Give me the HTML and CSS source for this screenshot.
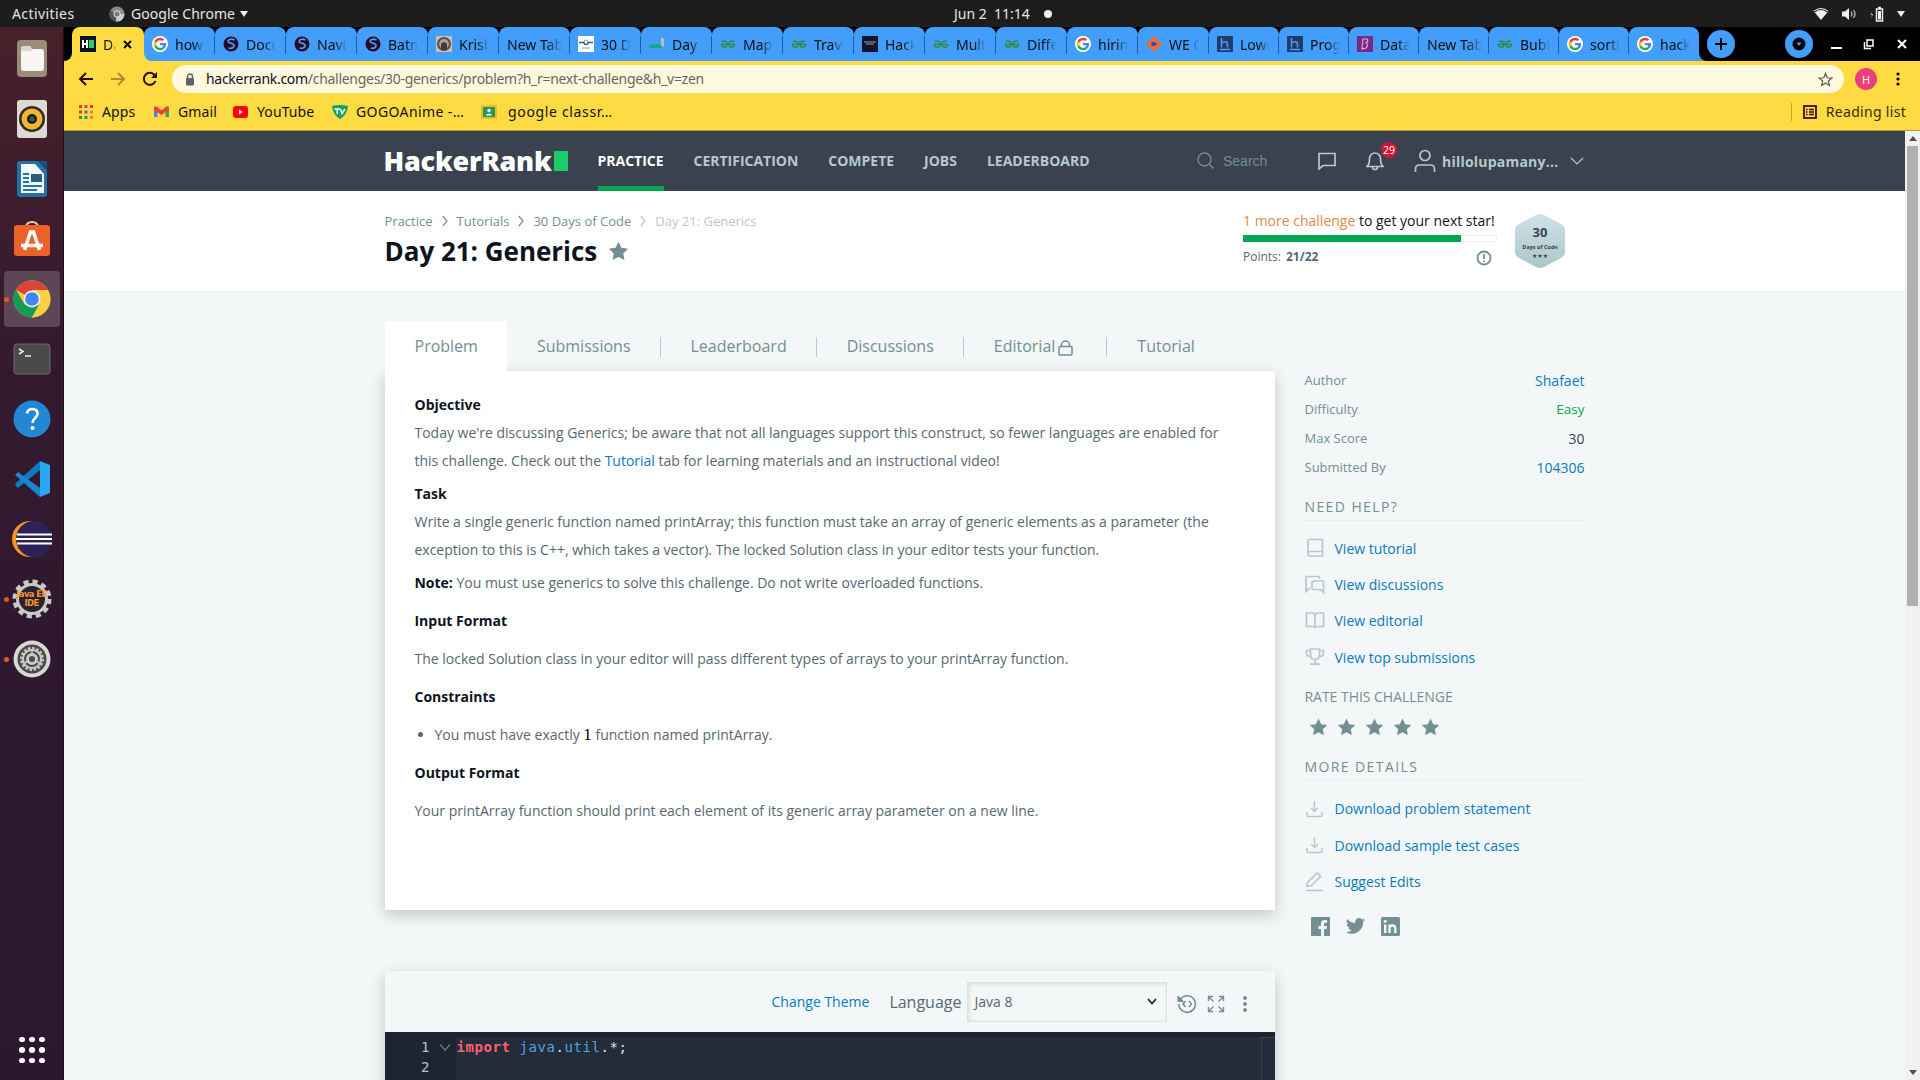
FILE: index.html
```html
<!DOCTYPE html>
<html lang="en">
<head>
<meta charset="utf-8">
<title>Day 21: Generics | HackerRank</title>
<link rel="stylesheet" href="styles.css">
</head>
<body>
<svg class="defs" width="0" height="0">
  <symbol id="g" viewBox="0 0 48 48"><circle cx="24" cy="24" r="24" fill="#fff"/><g transform="translate(5 5) scale(.79)"><path fill="#ea4335" d="M24 9.500c3.540 0 6.710 1.220 9.210 3.600l6.850-6.850C35.900 2.380 30.470 0 24 0 14.620 0 6.510 5.380 2.560 13.220l7.980 6.190C12.430 13.720 17.740 9.500 24 9.500z"/><path fill="#4285f4" d="M46.980 24.550c0-1.570-.15-3.090-.38-4.550H24v9.020h12.940c-.58 2.960-2.260 5.480-4.780 7.180l7.730 6c4.510-4.180 7.090-10.360 7.090-17.650z"/><path fill="#fbbc05" d="M10.530 28.590c-.48-1.450-.76-2.990-.76-4.590s.27-3.140.76-4.590l-7.980-6.190C.92 16.460 0 20.120 0 24s.92 7.540 2.560 10.780l7.970-6.190z"/><path fill="#34a853" d="M24 48c6.480 0 11.930-2.130 15.890-5.810l-7.730-6c-2.150 1.450-4.920 2.300-8.160 2.300-6.260 0-11.570-4.220-13.470-9.910l-7.980 6.190C6.510 42.620 14.620 48 24 48z"/></g></symbol>
  <symbol id="gfg" viewBox="0 0 16 16"><g fill="none" stroke="#2f8d46" stroke-width="1.500"><path d="M2 5.200h2.500q3.200.4 2.700 3.300-.6 2.700-3 2.700T1.500 9M1 8.300h14M14 5.200h-2.500q-3.200.4-2.700 3.300.6 2.700 3 2.700T14.500 9"/></g></symbol>
  <symbol id="globe" viewBox="0 0 16 16"><circle cx="8" cy="8" r="7.500" fill="#2a0a22"/><path d="M11.500 4Q9 2.500 6.500 3.500 4 5 6 6.500l4 1.500q2 1.500 0 3.500-2 1.500-4.500.5" fill="none" stroke="#439dfb" stroke-width="1.800"/></symbol>
  <symbol id="hh" viewBox="0 0 16 16"><rect width="16" height="16" rx="1" fill="#243a6b"/><path d="M4.500 2v9.500M4.500 7.500c1-2.300 6-2.300 6 .5v3.500M3 13.500h10" fill="none" stroke="#439dfb" stroke-width="1.500"/></symbol>
  <symbol id="star" viewBox="0 0 24 24"><path d="M12 .8l3.500 7.400 8.100 1.100-5.900 5.600 1.500 8L12 19.100l-7.200 3.800 1.500-8L.4 9.300l8.100-1.100z"/></symbol>
  <symbol id="dl" viewBox="0 0 20 20"><path d="M9.500 2v10M6 9l3.500 3.500L13 9M2 13v3q0 1.500 1.500 1.500h12q1.500 0 1.500-1.500v-3" fill="none" stroke="currentColor" stroke-width="1.500"/></symbol>
  <symbol id="crumb" viewBox="0 0 6 12"><path d="M.8 1l4.200 5-4.200 5" fill="none" stroke="currentColor" stroke-width="1.200"/></symbol>
</svg>

<div class="topbar ui">
  <span class="activities">Activities</span>
  <svg class="tb-chrome" width="16" height="16" viewBox="0 0 16 16"><circle cx="8" cy="8" r="7.500" fill="#8c8c8c"/><path d="M8 8L1 4.500A7.500 7.500 0 0 0 7 15.500z" fill="#555"/><path d="M8 8h7.500A7.500 7.500 0 0 1 7 15.500z" fill="#ccc"/><circle cx="8" cy="8" r="3.500" fill="#ddd"/><circle cx="8" cy="8" r="2.500" fill="#777"/></svg>
  <span class="app-name">Google Chrome</span>
  <span class="caret"></span>
  <span class="clock">Jun 2&nbsp; 11:14</span><span class="dot"></span>
  <div class="tray">
    <svg width="16" height="14" viewBox="0 0 16 14"><path d="M.5 4Q8-2 15.500 4L8 13z" fill="#eee"/><path d="M1.500 5Q8 0 14.500 5" fill="none" stroke="#1d1d1d" stroke-width="1.200"/></svg>
    <svg width="16" height="14" viewBox="0 0 16 14"><path d="M1 4.500h3L8 1v12L4 9.500H1z" fill="#eee"/><path d="M10 4.500q2 2.500 0 5M12.500 3q3 4 0 8" fill="none" stroke="#ccc" stroke-width="1.200"/></svg>
    <svg width="16" height="16" viewBox="0 0 16 16"><path d="M3.500 5L1 9h2l-1 3.500L4.500 8h-2z" fill="#999"/><path d="M9 1.500h3M7.500 3h6v12h-6z" fill="none" stroke="#eee" stroke-width="1.500"/><path d="M9 5h3v8.500H9z" fill="#eee"/></svg>
    <span class="caret"></span>
  </div>
</div>

<div class="desktop">
<aside class="dock">
  <div class="app"><svg width="32" height="40" viewBox="0 0 32 40"><rect x="1" y="1" width="30" height="37" rx="4" fill="#9a8c79"/><path d="M5 10q0-3 3-3h6l2 3h9q3 0 3 3v16q0 3-3 3H8q-3 0-3-3z" fill="#f8f6f4"/><path d="M5 11q0-4 3-4h6l2 3v2H5z" fill="#ddd6cd"/></svg></div>
  <div class="app"><svg width="32" height="40" viewBox="0 0 32 40"><rect x="1" y="1" width="30" height="38" rx="3" fill="#dedad2"/><circle cx="16" cy="20" r="13" fill="#2c2c2c"/><circle cx="16" cy="20" r="10.500" fill="#f0b92b"/><circle cx="16" cy="20" r="5" fill="#1c1c1c"/><circle cx="16" cy="20" r="2.500" fill="#555"/></svg></div>
  <div class="app"><svg width="32" height="38" viewBox="0 0 32 38"><path d="M4 1h18l9 9v24q0 3-3 3H4q-3 0-3-3V4q0-3 3-3z" fill="#1e74a8"/><path d="M5 4h14l9 10v19H5z" fill="#f5f8fa"/><path d="M23 1h8v8z" fill="#15587f"/><path d="M7 14h6M7 18h6M7 22h6M7 26h19M7 30h14" stroke="#1e74a8" stroke-width="1.800"/><rect x="15" y="14" width="11" height="8" fill="#2d5d7c"/></svg></div>
  <div class="app"><svg width="38" height="38" viewBox="0 0 38 38"><path d="M13 8q0-6 6-6t6 6" fill="none" stroke="#e3cda5" stroke-width="2"/><rect x="1" y="5" width="36" height="31" rx="3" fill="#ee6129"/><path d="M11.500 30l6-18h3l6 18M8 25.500h22" fill="none" stroke="#fff" stroke-width="3.500"/></svg></div>
  <div class="app active"><i></i><svg width="38" height="38" viewBox="0 0 38 38"><circle cx="19" cy="19" r="18.500" fill="#f9c935"/><path d="M19 19L3 9.750A18.500 18.500 0 0 1 35 10H19z" fill="#dc4437"/><path d="M3 9.750A18.500 18.500 0 0 0 19 37.500L26 25 12 25z" fill="#159b58"/><path d="M26.500 24L19 37.500A18.500 18.500 0 0 0 35 10H19z" fill="#fecf44"/><circle cx="19" cy="19" r="8.500" fill="#f1f1f1"/><circle cx="19" cy="19" r="6.800" fill="#4285f4"/></svg></div>
  <div class="app"><svg width="38" height="32" viewBox="0 0 38 32"><rect x="1" y="1" width="36" height="30" rx="3" fill="#4a4a4a" stroke="#6a6a6a"/><path d="M6 6l4 2.500L6 11M12 13h6" fill="none" stroke="#eee" stroke-width="1.500"/></svg></div>
  <div class="app"><svg width="38" height="38" viewBox="0 0 38 38"><circle cx="19" cy="19" r="18.500" fill="#2387d3"/><path d="M14 13.500q.5-4.500 5.500-4.500t5 5c0 3.500-5 4.500-5 9" fill="none" stroke="#fff" stroke-width="2.600"/><circle cx="19.500" cy="28" r="2" fill="#fff"/></svg></div>
  <div class="app"><svg width="38" height="38" viewBox="0 0 38 38"><path d="M27 1v9L5 28l-3-3 1-2z" fill="#0f7ac0"/><path d="M27 28v9L2 15l3-3z" fill="#1687d0"/><path d="M27 1l10 4v28l-10 4z" fill="#2ba6f2"/></svg></div>
  <div class="app"><svg width="42" height="38" viewBox="0 0 42 38"><circle cx="19" cy="19" r="18" fill="#f7941e"/><circle cx="23" cy="19" r="18" fill="#2c2255"/><path d="M6 14.500h35M5 19h36M6 23.500h35" stroke="#fff" stroke-width="2.200"/></svg></div>
  <div class="app"><i></i><svg width="40" height="40" viewBox="0 0 40 40"><circle cx="20" cy="20" r="17" fill="none" stroke="#c9c9c9" stroke-width="5" stroke-dasharray="5 3.900"/><circle cx="20" cy="20" r="14.500" fill="#2a2230" stroke="#c9c9c9" stroke-width="3"/></svg><b>Java EE<br>IDE</b></div>
  <div class="app"><i></i><svg width="38" height="38" viewBox="0 0 38 38"><circle cx="19" cy="19" r="18.500" fill="#d8d8d5"/><circle cx="19" cy="19" r="14.500" fill="#4b4b4b"/><circle cx="19" cy="19" r="10.500" fill="none" stroke="#c9c9c9" stroke-width="3" stroke-dasharray="2.500 1.600"/><circle cx="19" cy="19" r="9" fill="none" stroke="#c9c9c9" stroke-width="2"/><circle cx="19" cy="19" r="4.500" fill="none" stroke="#c9c9c9" stroke-width="3"/><path d="M19 14V9M15 21l-5 3M23 21l5 3" stroke="#c9c9c9" stroke-width="1.500"/></svg></div>
  <div class="grid-btn"><s></s><s></s><s></s><s></s><s></s><s></s><s></s><s></s><s></s></div>
</aside>

<main class="window">
  <div class="tabstrip ui">
    <div class="edge"><span></span></div>
    <div class="tabs">
      <div class="tab on"><svg width="16" height="16" viewBox="0 0 16 16"><rect width="16" height="16" fill="#0b121c"/><path d="M3 4v8M7 4v8M3 8h4" stroke="#fff" stroke-width="2"/><rect x="9" y="4" width="5" height="8" fill="#1ed760"/></svg><span>Day</span><em><svg width="9" height="9" viewBox="0 0 9 9"><path d="M1 1l7 7M8 1L1 8" stroke="#000" stroke-width="1.800"/></svg></em></div>
      <div class="tab first"><div><svg width="16" height="16"><use href="#g"/></svg><span>how to</span></div></div>
      <div class="tab"><svg width="16" height="16"><use href="#globe"/></svg><span>Docum</span></div>
      <div class="tab"><svg width="16" height="16"><use href="#globe"/></svg><span>Navig</span></div>
      <div class="tab"><svg width="16" height="16"><use href="#globe"/></svg><span>Batma</span></div>
      <div class="tab"><svg width="16" height="16" viewBox="0 0 16 16"><rect width="16" height="16" fill="#c9bfb5"/><circle cx="8" cy="8" r="7" fill="#5a4c49"/><circle cx="8" cy="8" r="5" fill="#aaa09a"/><path d="M5 14V8q3-4 6 0v6z" fill="#45383a"/></svg><span>Krishn</span></div>
      <div class="tab plain"><span>New Tab</span></div>
      <div class="tab"><svg width="16" height="16" viewBox="0 0 16 16"><rect width="16" height="16" fill="#fff"/><path d="M1 6.500h5a2 2 0 0 0 4 0h5" fill="none" stroke="#34618f" stroke-width="1.500"/><path d="M6 6a2 2 0 0 1 4 0M4 12h8" fill="none" stroke="#789bbd"/></svg><span>30 Day</span></div>
      <div class="tab"><svg width="16" height="16" viewBox="0 0 16 16"><path d="M0 8l2 1 2-1 2 1 2-1 5 1v3H0z" fill="#11a88a"/><path d="M12 1l3 2v8l-3-1z" fill="#b8bcc0"/></svg><span>Day 7</span></div>
      <div class="tab"><svg width="16" height="16"><use href="#gfg"/></svg><span>Map i</span></div>
      <div class="tab"><svg width="16" height="16"><use href="#gfg"/></svg><span>Traver</span></div>
      <div class="tab"><svg width="16" height="16" viewBox="0 0 16 16"><rect width="16" height="16" fill="#0f1730"/><path d="M2 6h12M4 8h8" stroke="#6b7385" stroke-width="1.500"/></svg><span>Hacke</span></div>
      <div class="tab"><svg width="16" height="16"><use href="#gfg"/></svg><span>Multip</span></div>
      <div class="tab"><svg width="16" height="16"><use href="#gfg"/></svg><span>Differ</span></div>
      <div class="tab"><svg width="16" height="16"><use href="#g"/></svg><span>hiring</span></div>
      <div class="tab"><svg width="16" height="16" viewBox="0 0 16 16"><path d="M8 0l8 8-8 8-8-8z" fill="#f26a28"/><path d="M5.500 6h3l3 2-3 2h-3z" fill="#2a4bd0"/></svg><span>WE Ca</span></div>
      <div class="tab"><svg width="16" height="16"><use href="#hh"/></svg><span>Lowe</span></div>
      <div class="tab"><svg width="16" height="16"><use href="#hh"/></svg><span>Progr</span></div>
      <div class="tab"><svg width="16" height="16" viewBox="0 0 16 16"><rect width="16" height="16" fill="#7b2a83"/><path d="M5 13L6 3h4q2 2-1 4 3 2 0 5z" fill="none" stroke="#e6a8e8" stroke-width="1.200"/></svg><span>Data S</span></div>
      <div class="tab plain"><span>New Tab</span></div>
      <div class="tab"><svg width="16" height="16"><use href="#gfg"/></svg><span>Bubbl</span></div>
      <div class="tab"><svg width="16" height="16"><use href="#g"/></svg><span>sortin</span></div>
      <div class="tab last"><svg width="16" height="16"><use href="#g"/></svg><span>hacke</span></div>
    </div>
    <div class="edge blue"><span></span></div>
    <div class="round plus"><svg width="14" height="14" viewBox="0 0 14 14"><path d="M7 1v12M1 7h12" stroke="#000" stroke-width="2"/></svg></div>
    <div class="round search-tabs"><svg width="14" height="14" viewBox="0 0 14 14"><circle cx="7" cy="7" r="6.500"/><path d="M4.500 5.500h5L7 9z" fill="#439dfb"/></svg></div>
    <svg class="min" width="11" height="12" viewBox="0 0 11 12"><path d="M0 10h11" stroke="#fff" stroke-width="2"/></svg>
    <svg class="res" width="11" height="11" viewBox="0 0 11 11"><path d="M4 1h6v6H4zM1.500 3v6.500H8" fill="none" stroke="#fff" stroke-width="1.500"/></svg>
    <svg class="cls" width="10" height="10" viewBox="0 0 10 10"><path d="M1 1l8 8M9 1L1 9" stroke="#fff" stroke-width="2"/></svg>
  </div>

  <div class="toolbar ui">
    <svg width="16" height="16" viewBox="0 0 16 16"><path d="M15 8H2M8 2L2 8l6 6" fill="none" stroke="#2a0a10" stroke-width="2"/></svg>
    <svg width="16" height="16" viewBox="0 0 16 16"><path d="M1 8h13M8 2l6 6-6 6" fill="none" stroke="#b08a2c" stroke-width="2"/></svg>
    <svg width="16" height="16" viewBox="0 0 16 16"><path d="M13.500 10A6 6 0 1 1 12.500 4L14 6" fill="none" stroke="#2a0a10" stroke-width="2"/><path d="M15 1v6H9z" fill="#2a0a10"/></svg>
    <div class="omni">
      <svg width="10" height="13" viewBox="0 0 10 13"><path d="M2.500 5V3.500a2.500 2.500 0 0 1 5 0V5" fill="none" stroke="#5f6368" stroke-width="1.500"/><rect x="1" y="5" width="8" height="7.500" rx="1" fill="#5f6368"/></svg>
      <span class="url">hackerrank.com<i>/challenges/30-generics/problem?h_r=next-challenge&amp;h_v=zen</i></span>
      <svg class="fav" width="15" height="15" viewBox="0 0 24 24"><path d="M12 2.500l2.800 6.700 7.200.6-5.500 4.700 1.700 7L12 17.700l-6.200 3.800 1.700-7L2 9.800l7.200-.6z" fill="none" stroke="#5f5f55" stroke-width="2"/></svg>
    </div>
    <div class="avatar">H</div>
    <svg class="kebab" width="4" height="14" viewBox="0 0 4 14"><circle cx="2" cy="2" r="1.600"/><circle cx="2" cy="7" r="1.600"/><circle cx="2" cy="12" r="1.600"/></svg>
  </div>

  <div class="bookmarks ui">
    <div class="bm b1"><svg width="14" height="14" viewBox="0 0 14 14"><path d="M0 0h3v3H0zM5.500 0h3v3h-3zM11 0h3v3h-3zM0 5.500h3v3H0z" fill="#e53a2e"/><path d="M5.500 5.500h3v3h-3z" fill="#2a7be0"/><path d="M0 11h3v3H0zM5.500 11h3v3h-3z" fill="#2c9a4b"/><path d="M11 5.500h3v3h-3zM11 11h3v3h-3z" fill="#f08a1c"/></svg><span>Apps</span></div>
    <div class="bm b2"><svg width="15" height="12" viewBox="0 0 15 12"><path d="M0 1v10h3.500V4z" fill="#4285f4"/><path d="M15 1v10h-3.500V4z" fill="#34a853"/><path d="M0 1.500Q1.500-.5 3.500 1l4 3.200 4-3.200q2-1.500 3.500.5V4L7.500 9 0 4z" fill="#ea4335"/></svg><span>Gmail</span></div>
    <div class="bm b3"><svg width="15" height="12" viewBox="0 0 15 12"><rect width="15" height="12" rx="3" fill="#f00"/><path d="M6 3.500l4 2.500-4 2.500z" fill="#fff"/></svg><span>YouTube</span></div>
    <div class="bm b4"><svg width="16" height="14" viewBox="0 0 16 14"><path d="M0 1q8-2 16 0-1 9-8 13Q1 10 0 1z" fill="#12a25b"/><path d="M2.500 4H8M5.200 4v5M8.500 4L10 8.500 13 4" fill="none" stroke="#fff" stroke-width="1.500"/></svg><span>GOGOAnime -…</span></div>
    <div class="bm b5"><svg width="16" height="14" viewBox="0 0 16 14"><rect width="16" height="14" rx="1" fill="#f2b92b"/><rect x="2" y="2" width="12" height="10" fill="#23985a"/><circle cx="8" cy="5.500" r="1.700" fill="#fff"/><path d="M4.500 10.500q3.500-4 7 0z" fill="#fff"/></svg><span>google classr…</span></div>
    <div class="reading"><svg width="14" height="14" viewBox="0 0 14 14"><rect x="1" y="1" width="12" height="12" fill="none" stroke="#3a1010" stroke-width="1.800"/><path d="M3 4.500h1.500M3 7h1.500M3 9.500h1.500M6 4.500h5M6 7h5M6 9.500h5" stroke="#3a1010" stroke-width="1.500"/></svg><span>Reading list</span></div>
  </div>

  <div class="viewport">
  <div class="page">
    <header class="hr-nav"><div class="wrap">
      <div class="logo">HackerRank<span></span></div>
      <nav><a class="on">PRACTICE</a><a>CERTIFICATION</a><a>COMPETE</a><a>JOBS</a><a>LEADERBOARD</a></nav>
      <div class="tools">
        <svg class="mag" width="18" height="18" viewBox="0 0 18 18"><circle cx="7.500" cy="7.500" r="6.500"/><path d="M12.500 12.500l4 4"/></svg>
        <span class="search">Search</span>
        <svg class="msg" width="18" height="18" viewBox="0 0 18 18"><path d="M1 1.500h16v12H5L1 17z"/></svg>
        <div class="bell"><svg width="18" height="20" viewBox="0 0 18 20"><path d="M1 15.500q2.500-2 2.500-8a5.500 5.500 0 0 1 11 0q0 6 2.500 8zM6.500 16a2.500 2.500 0 0 0 5 0"/></svg><b>29</b></div>
        <svg class="usr" width="22" height="24" viewBox="0 0 22 24"><circle cx="11" cy="6.500" r="5"/><path d="M1.500 23v-3q0-4 4-4h11q4 0 4 4v3"/></svg>
        <span class="name">hillolupamany...</span>
        <svg class="chev" width="14" height="8" viewBox="0 0 14 8"><path d="M1 1l6 6 6-6"/></svg>
      </div>
    </div></header>

    <section class="hero"><div class="wrap">
      <div class="head">
        <div class="crumbs"><span>Practice</span><svg width="6" height="12"><use href="#crumb"/></svg><span>Tutorials</span><svg width="6" height="12"><use href="#crumb"/></svg><span>30 Days of Code</span><svg class="dim" width="6" height="12"><use href="#crumb"/></svg><span class="dim">Day 21: Generics</span></div>
        <h1>Day 21: Generics<svg width="21" height="20"><use href="#star"/></svg></h1>
      </div>
      <div class="progress">
        <p><span>1 more challenge</span> to get your next star!</p>
        <div class="bar"><div></div></div>
        <div class="points">Points:<b>21/22</b><svg width="16" height="16" viewBox="0 0 16 16"><circle cx="8" cy="8" r="6.500"/><path d="M8 4v5M8 10.500V12"/></svg></div>
      </div>
      <div class="badge"><svg width="50" height="56" viewBox="0 0 50 56"><defs><linearGradient id="bg" x1="0" y1="0" x2="0" y2="1"><stop offset="0" stop-color="#cfe2ea"/><stop offset="1" stop-color="#abc6c6"/></linearGradient></defs><path d="M21 2q4-2 8 0l17 9q4 2 4 6v22q0 4-4 6l-17 9q-4 2-8 0L4 45q-4-2-4-6V17q0-4 4-6z" fill="url(#bg)"/></svg><div><b>30</b><small>Days of Code</small><em>★★★</em></div></div>
    </div></section>

    <div class="wrap body">
      <div class="main">
        <div class="ptabs"><a class="on">Problem</a><a>Submissions</a><a>Leaderboard</a><a>Discussions</a><a class="ed">Editorial<svg width="15" height="16" viewBox="0 0 15 16"><rect x="1" y="6.500" width="13" height="8.500" rx="1"/><path d="M3.500 6.500V5a4 4 0 0 1 8 0v1.500"/></svg></a><a>Tutorial</a></div>
        <div class="panel">
          <p><b>Objective</b><br>Today we're discussing Generics; be aware that not all languages support this construct, so fewer languages are enabled for<br>this challenge. Check out the <a>Tutorial</a> tab for learning materials and an instructional video!</p>
          <p><b>Task</b><br>Write a single generic function named printArray; this function must take an array of generic elements as a parameter (the<br>exception to this is C++, which takes a vector). The locked Solution class in your editor tests your function.</p>
          <p><b>Note:</b> You must use generics to solve this challenge. Do not write overloaded functions.</p>
          <div class="sec"><b>Input Format</b></div>
          <div class="sec">The locked Solution class in your editor will pass different types of arrays to your printArray function.</div>
          <div class="sec"><b>Constraints</b></div>
          <ul class="sec"><li>You must have exactly <span class="math">1</span> function named printArray.</li></ul>
          <div class="sec"><b>Output Format</b></div>
          <div class="sec">Your printArray function should print each element of its generic array parameter on a new line.</div>
        </div>

        <div class="editor">
          <div class="ebar">
            <a>Change Theme</a><span class="lang">Language</span>
            <div class="select">Java 8<svg width="10" height="7" viewBox="0 0 10 7"><path d="M1 1l4 4.500L9 1" fill="none" stroke="#222" stroke-width="1.800"/></svg></div>
            <svg class="e1" width="20" height="20" viewBox="0 0 20 20"><path d="M3.500 5A8.300 8.300 0 1 1 1.800 10" fill="none" stroke="#738f93" stroke-width="1.600"/><path d="M1 2v5.500h5.500z" fill="#738f93" stroke="#738f93"/><path d="M8.500 7L6 10l2.500 3M12 7l2.500 3-2.500 3" fill="none" stroke="#738f93" stroke-width="1.500"/></svg>
            <svg class="e2" width="18" height="18" viewBox="0 0 18 18"><path d="M1.500 6V1.500H6M12 1.500h4.500V6M16.500 12v4.500H12M6 16.500H1.500V12M1.500 1.500l5 5M16.500 1.500l-5 5M16.500 16.500l-5-5M1.500 16.500l5-5" fill="none" stroke="#738f93" stroke-width="1.400"/></svg>
            <svg class="e3" width="4" height="16" viewBox="0 0 4 16" fill="#738f93"><circle cx="2" cy="2" r="2"/><circle cx="2" cy="8" r="2"/><circle cx="2" cy="14" r="2"/></svg>
          </div>
          <div class="code">
            <div class="gutter"><div>1<svg width="12" height="7" viewBox="0 0 12 7"><path d="M1 .5l5 5.500 5-5.500" fill="none" stroke="#8d9aa3" stroke-width="1.100"/></svg></div><div>2</div></div>
            <pre><b>import</b> <i>java</i>.<i>util</i>.*;</pre>
            <div class="ruler"></div>
          </div>
        </div>
      </div>

      <aside class="side">
        <dl><dt>Author</dt><dd class="lk">Shafaet</dd><dt>Difficulty</dt><dd class="easy">Easy</dd><dt>Max Score</dt><dd>30</dd><dt>Submitted By</dt><dd class="lk">104306</dd></dl>
        <h4 class="help">NEED HELP?</h4>
        <ul class="links">
          <li><svg width="20" height="20" viewBox="0 0 20 20"><path d="M3 15V3q0-1.500 1.500-1.500h13v16.500H4.500Q3 18 3 16.500V15q0-1.500 1.500-1.500h13"/></svg>View tutorial</li>
          <li><svg width="20" height="20" viewBox="0 0 20 20"><path d="M14.500 4V3q0-1.500-1.500-1.500H2.500Q1 1.500 1 3v13.500l4-3.500M7.500 7q-.5-1 1-1h8.500q1.500 0 1.500 1.500V17.500l-3-3H8.500q-1.500 0-1.500-1.500V7z"/></svg>View discussions</li>
          <li><svg width="20" height="20" viewBox="0 0 20 20"><path d="M10 4.500Q9.500 2 7 2H1.500v13.500H7.500q2.500 0 2.500 2 0-2 2.500-2h6V2H13q-2.500 0-3 2.500v13"/></svg>View editorial</li>
          <li><svg width="20" height="20" viewBox="0 0 20 20"><path d="M5.500 2h9v6q0 4.500-4.500 4.500T5.500 8zM5.500 3.500h-4v3q0 3 4 3M14.500 3.500h4v3q0 3-4 3M10 12.500V17M5 17.200h10"/></svg>View top submissions</li>
        </ul>
        <h5>RATE THIS CHALLENGE</h5>
        <div class="stars"><svg width="19" height="18"><use href="#star"/></svg><svg width="19" height="18"><use href="#star"/></svg><svg width="19" height="18"><use href="#star"/></svg><svg width="19" height="18"><use href="#star"/></svg><svg width="19" height="18"><use href="#star"/></svg></div>
        <h4>MORE DETAILS</h4>
        <ul class="links more">
          <li><svg width="20" height="20"><use href="#dl"/></svg>Download problem statement</li>
          <li><svg width="20" height="20"><use href="#dl"/></svg>Download sample test cases</li>
          <li><svg width="20" height="20" viewBox="0 0 20 20"><path d="M2 14.500l.5-4L11.500 1.500q1-1 3 1.500t.5 2L6.500 13.500zM1 18.500h17"/></svg>Suggest Edits</li>
        </ul>
        <div class="social">
          <svg width="19" height="19" viewBox="0 0 19 19"><path d="M1 0h17q1 0 1 1v17q0 1-1 1h-5v-7h2.500l.4-3H13V7q0-1.300 1.500-1.300H16V3h-2.300Q10 3 10 6.600V9H7.500v3H10v7H1q-1 0-1-1V1q0-1 1-1z"/></svg>
          <svg width="19" height="16" viewBox="0 0 24 20"><path d="M24 2.400a10 10 0 0 1-2.800.8A5 5 0 0 0 23.300.5a10 10 0 0 1-3.100 1.200 4.900 4.900 0 0 0-8.400 4.500A14 14 0 0 1 1.700 1a4.900 4.900 0 0 0 1.500 6.600A4.900 4.900 0 0 1 1 7v.1a4.900 4.900 0 0 0 4 4.800 5 5 0 0 1-2.300.1 4.900 4.900 0 0 0 4.600 3.400A9.900 9.900 0 0 1 0 17.500 14 14 0 0 0 21.500 5a10 10 0 0 0 2.500-2.600z"/></svg>
          <svg width="19" height="19" viewBox="0 0 19 19"><rect width="19" height="19" rx="1.500"/><path d="M4.200 7.500V16M8.500 7.500V16M8.500 11q.5-2.500 3-2.500t2.800 3V16" fill="none" stroke="#f3f7f7" stroke-width="2.400"/><circle cx="4.200" cy="4.300" r="1.600" fill="#f3f7f7"/></svg>
        </div>
      </aside>
    </div>
  </div>
  <div class="scroll"><u></u><div></div></div>
  </div>
</main>
</div>
</body>
</html>
```
FILE: styles.css
```css
* { box-sizing: border-box; }
body { margin: 0; width: 1920px; height: 1080px; overflow: hidden; font-family: "Open Sans", sans-serif; display: flex; flex-direction: column; }
svg { display: block; flex: none; }
.defs { position: absolute; }
p, h1, h4, h5, ul, dl, dd, pre { margin: 0; padding: 0; }
ul { list-style: none; }
.ui { font-family: "Noto Sans", sans-serif; font-size: 14px; white-space: nowrap; }

.topbar { height: 27px; flex: none; background: #1d1d1d; color: #e6e6e6; display: flex; align-items: center; padding: 0 12px; }
.activities { width: 97px; letter-spacing: .42px; }
.app-name { margin-left: 6px; width: 109px; letter-spacing: .05px; }
.caret { border: 4.500px solid transparent; border-top: 6px solid #eee; border-bottom: 0; }
.clock { margin-left: 706px; width: 79px; }
.dot { width: 8px; height: 8px; margin-left: 11px; border-radius: 50%; background: #eee; }
.tray { margin-left: auto; margin-right: 3px; display: flex; align-items: center; gap: 12px; }

.desktop { flex: 1; min-height: 0; display: flex; }
.dock { width: 64px; flex: none; background: linear-gradient(#48202a, #351a2e 30%, #2d1830 70%, #2a172e); border-right: 1px solid #1c1018; display: flex; flex-direction: column; align-items: center; padding-top: 2px; }
.app { position: relative; width: 56px; height: 56px; margin: 2px 0; display: flex; align-items: center; justify-content: center; border-radius: 4px; }
.app.active { background: #5d4657; }
.app i { position: absolute; left: 0; top: 26px; width: 5px; height: 5px; border-radius: 50%; background: #e95420; }
.app b { position: absolute; inset: 19px 0 auto; text-align: center; white-space: nowrap; font: bold 8.500px/9px "DejaVu Sans", sans-serif; letter-spacing: -.6px; color: #f59331; }
.grid-btn { margin: auto 0 17px; display: grid; grid-template-columns: repeat(3, 5px); gap: 5px; }
.grid-btn s { width: 5.500px; height: 5.500px; border-radius: 50%; background: #fff; }

.window { flex: 1; min-width: 0; display: flex; flex-direction: column; }
.tabstrip { height: 34px; flex: none; background: #000; display: flex; align-items: center; color: #111; }
.edge { width: 8px; height: 34px; background: #ffdb43; }
.edge span { display: block; height: 100%; background: #000; border-radius: 0 0 8px 0; }
.edge.blue { background: #439dfb; }
.edge.blue span { border-radius: 0 0 0 8px; }
.tabs { height: 34px; display: grid; grid-template-columns: 72px repeat(15, 71px) repeat(7, 70px); }
.tab { position: relative; min-width: 0; height: 34px; display: flex; align-items: center; gap: 7px; padding-left: 8px; border-radius: 8px 8px 0 0; background: #439dfb; }
.tab:not(.on):not(.last)::after { content: ""; position: absolute; right: 0; top: 9px; width: 1px; height: 18px; background: #1d5da8; }
.tab > span, .tab.first span { width: 30px; overflow: hidden; -webkit-mask-image: linear-gradient(90deg, #000 60%, transparent); mask-image: linear-gradient(90deg, #000 60%, transparent); }
.tab.plain > span { width: 56px; -webkit-mask-image: linear-gradient(90deg, #000 70%, transparent); mask-image: linear-gradient(90deg, #000 70%, transparent); }
.tab.on { background: #ffdb43; }
.tab.on > span { width: 13px; }
.tab.first { padding: 0; background: linear-gradient(#000 50%, #ffdb43 50%); border-radius: 0; }
.tab.first > div { flex: 1; height: 34px; display: flex; align-items: center; gap: 7px; padding-left: 8px; background: #439dfb; border-radius: 8px 8px 0 8px; }
.round { width: 28px; height: 28px; border-radius: 50%; background: #439dfb; display: grid; place-items: center; }
.search-tabs { margin-left: 50px; }
.min { margin-left: 18px; } .res { margin-left: 21px; } .cls { margin-left: 23px; }

.toolbar { height: 36px; flex: none; background: #ffdb43; display: flex; align-items: center; padding-left: 14px; gap: 16px; }
.omni { width: 1672px; height: 28px; margin-left: -2px; border-radius: 14px; background: #fff9e0; display: flex; align-items: center; padding: 0 11px 0 13px; }
.url { margin: -2px 0 0 11px; color: #111; letter-spacing: -.29px; }
.url i { font-style: normal; color: #6b675a; }
.fav { margin-left: auto; }
.avatar { width: 22px; height: 22px; margin-left: -5px; border-radius: 50%; background: #ec407a; color: #fff; font-size: 11px; display: grid; place-items: center; }
.kebab { margin-left: 3px; }

.bookmarks { height: 34px; flex: none; background: #ffdb43; border-bottom: 1px solid #b89a2e; display: flex; align-items: center; padding: 0 14px 4px 15px; color: #111; }
.bm { display: flex; align-items: center; }
.bm span { margin-left: 9px; letter-spacing: .1px; }
.b1 { width: 75px; } .b2 { width: 79px; } .b3 { width: 99px; } .b4 { width: 149px; }
.b4 span { letter-spacing: .4px; margin-left: 8px; }
.b5 span { margin-left: 11px; letter-spacing: .66px; }
.reading { margin-left: auto; height: 18px; border-left: 1px solid #c9a52c; padding-left: 11px; display: flex; align-items: center; gap: 9px; color: #3a2a10; letter-spacing: .3px; }

.viewport { flex: 1; min-height: 0; display: flex; }
.page { flex: 1; min-width: 0; overflow: hidden; background: #f3f7f7; }
.wrap { width: 1200px; margin: 0 auto; display: flex; }
.hr-nav { height: 60px; background: #39424e; }
.hr-nav .wrap { height: 60px; align-items: center; }
.logo { width: 214px; margin-left: -1px; display: flex; align-items: center; gap: 2px; font-size: 27px; font-weight: 800; letter-spacing: -.22px; color: #fff; line-height: 40px; }
.logo span { width: 14px; height: 20px; background: #1bcb6c; }
nav { display: flex; gap: 30px; height: 60px; font-size: 14px; font-weight: 700; line-height: 60px; color: #b7c9cc; white-space: nowrap; letter-spacing: -.01px; }
nav .on { color: #fff; box-shadow: inset 0 -5px #00a651; }
.tools { margin: 0 .5px 0 auto; display: flex; align-items: center; }
.tools svg { fill: none; stroke: #b7c9cc; stroke-width: 1.700; }
.tools .mag { stroke: #738f93; stroke-width: 1.400; }
.search { width: 44px; margin: 0 51px 0 8px; font: 14px "Liberation Sans", sans-serif; color: #738f93; }
.bell { position: relative; margin: 0 30px; }
.bell b { position: absolute; left: 15px; top: -9px; width: 16px; height: 16px; border-radius: 50%; background: #d11534; color: #fff; font: 10.500px/16px "Open Sans", sans-serif; text-align: center; }
.name { width: 116px; margin: 0 12px 0 6px; font-size: 14px; font-weight: 700; color: #b7c9cc; letter-spacing: .22px; }
.tools .chev { stroke-width: 1.200; }

.hero { height: 101px; background: #fff; border-bottom: 1px solid #e7eeef; }
.head { width: 858.500px; padding-top: 19px; }
.crumbs { display: flex; align-items: center; gap: 9px; height: 21px; font-size: 13px; color: #738f93; }
.dim { color: #b7c9cc; }
h1 { display: flex; align-items: center; gap: 11px; height: 40px; font-size: 26px; font-weight: 700; color: #0e141e; white-space: nowrap; letter-spacing: -.02px; }
h1 svg, .stars, .social { fill: #738f93; }
.progress { width: 254px; padding-top: 19px; font-size: 14px; color: #0e141e; line-height: 22px; white-space: nowrap; }
.progress p span { color: #dd8a4a; }
.bar { height: 7px; margin-top: 3px; border: 1px solid #eef1f1; }
.bar div { width: 218px; height: 7px; margin: -1px; background: #00a651; }
.points { display: flex; align-items: center; gap: 5px; margin-top: 4px; font-size: 12px; color: #576871; }
.points svg { margin: 2px 5px 0 auto; fill: none; stroke: #738f93; stroke-width: 1.800; }
.badge { position: relative; margin: 22px 0 0 18px; width: 50px; height: 56px; }
.badge div { position: absolute; inset: 11px 0 0; text-align: center; display: flex; flex-direction: column; color: #39424e; }
.badge b { font-size: 13px; line-height: 16px; }
.badge small { font-size: 5.500px; font-weight: 700; line-height: 14px; }
.badge em { font: normal 6px/3px "DejaVu Sans", sans-serif; }

.body { gap: 30px; padding-top: 29px; }
.main { width: 890px; }
.ptabs { display: flex; height: 50px; position: relative; z-index: 1; font-size: 16px; line-height: 51px; color: #738f93; }
.ptabs a { position: relative; padding: 0 30px; }
.ptabs .on { background: #fff; padding-right: 29px; }
.ptabs a:not(.on):not(:last-child)::after { content: ""; position: absolute; right: 0; top: 16px; width: 1px; height: 20px; background: #b7c9cc; }
.ptabs .ed { display: flex; align-items: center; gap: 3px; padding-right: 34px; }
.ed svg { fill: none; stroke: #738f93; stroke-width: 1.500; margin-top: 3px; }
.panel { height: 539px; padding: 20px 30px; background: #fff; box-shadow: 0 5px 15px rgba(0,0,0,.2); font-size: 14px; line-height: 28px; color: #576871; white-space: nowrap; letter-spacing: -.01px; }
.panel b { color: #0e141e; font-weight: 700; }
.panel p { margin-bottom: 5px; }
.panel a, .ebar a { color: #097bbf; }
.sec { height: 28px; margin-top: 10px; }
ul.sec { list-style: disc; padding-left: 20px; }
.math { font: 17px/20px "Liberation Serif", serif; color: #000; }

.editor { margin-top: 61px; box-shadow: 0 5px 15px rgba(0,0,0,.2); }
.ebar { height: 61px; background: #f3f7f7; display: flex; align-items: center; padding-right: 28px; justify-content: flex-end; font-size: 14px; color: #576871; }
.lang { margin: 0 5px 0 20px; font-size: 16px; }
.select { width: 200px; height: 40px; padding: 0 9px 0 7px; border: 1px solid #d8e2e3; box-shadow: inset 1px 1px 4px #d3dfe0; display: flex; align-items: center; justify-content: space-between; }
.e1 { margin: 4px 0 0 10px; } .e2 { margin: 4px 0 0 10px; } .e3 { margin: 4px 0 0 18px; }
.code { height: 60px; background: #1d2433; border-top: 5px solid #1c2430; display: flex; font: 14px/20px "DejaVu Sans Mono", monospace; }
.gutter { width: 71px; color: #b5c1c6; }
.gutter div { display: flex; align-items: center; gap: 10px; padding-left: 36.500px; }
.code pre { flex: 1; background: #242b3a; color: #dfe3e6; font: inherit; letter-spacing: .57px; padding-left: 1px; }
.code pre b { color: #ff5f70; } .code pre i { color: #4fa6e0; font-style: normal; }
.ruler { width: 14px; background: #242b3a; border: 1px solid #39424e; border-right: 0; }

.side { width: 280px; padding-top: 45px; }
dl { display: grid; grid-template-columns: 1fr auto; line-height: 29px; font-size: 14px; color: #39424e; }
dt { font-size: 13px; color: #738f93; }
dd { text-align: right; }
.lk { color: #097bbf; } .easy { color: #00a651; font-size: 13.500px; }
h4 { height: 29px; border-bottom: 1px solid #e7eeef; font-size: 14px; font-weight: 400; line-height: 29px; letter-spacing: 1.400px; color: #738f93; margin-top: 10px; }
.links { padding-top: 9px; font-size: 14px; color: #097bbf; }
.links.more { padding-top: 10px; }
.links li { display: flex; align-items: center; gap: 10px; height: 36.400px; }
.links svg { color: #b7c9cc; fill: none; stroke: #b7c9cc; stroke-width: 1.700; }
h5 { margin-top: 10px; font-size: 14px; font-weight: 400; line-height: 22px; color: #738f93; letter-spacing: -.03px; }
.stars { display: flex; gap: 9px; padding: 10px 0 0 4px; }
.stars + h4 { margin-top: 16px; }
.social { display: flex; align-items: center; gap: 16px; padding: 17px 0 0 6px; }

.scroll { width: 15px; background: #f1f1f1; padding-top: 5px; display: flex; flex-direction: column; align-items: center; }
.scroll u { border: 4px solid transparent; border-bottom: 5px solid #505050; border-top: 0; margin-bottom: 5px; }
.scroll div { width: 11px; height: 460px; background: #b0b0b0; }
.scroll::after { content: ""; margin: auto 0 5px; border: 4px solid transparent; border-top: 5px solid #505050; border-bottom: 0; }
```
